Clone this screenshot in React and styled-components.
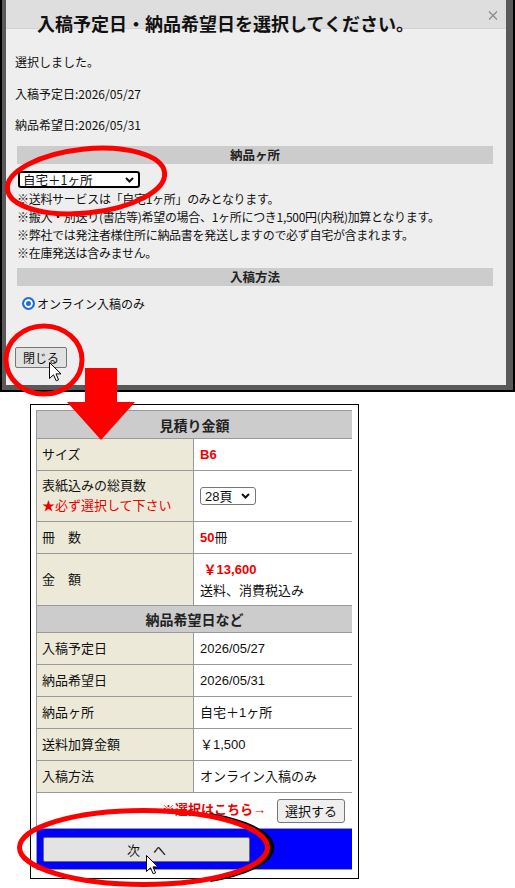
import { Fragment } from 'react'
import styled, { createGlobalStyle } from 'styled-components'

const GlobalStyle = createGlobalStyle`
  html, body {
    margin: 0;
    padding: 0;
    background: #fff;
  }
  body {
    width: 515px;
    height: 888px;
    overflow: hidden;
    font-family: "Liberation Sans", "Noto Sans CJK JP", sans-serif;
    color: #111;
  }
`

const Page = styled.div`
    position: relative;
    width: 515px;
    height: 888px;
    overflow: hidden;
`

/* ---------- top screenshot: the modal ---------- */

const Shot = styled.div`
    width: 515px;
    height: 392px;
    box-sizing: border-box;
    border: 2px solid #000;
    border-top: none;
    background: #595959;
    padding-left: 4px;
`

const Dialog = styled.div`
    width: 500px;
    height: 385px;
    background: #eeeeee;
    display: flex;
    flex-direction: column;
    font-family: "Noto Sans CJK JP", sans-serif;
    font-size: 12px;
    color: #111;
`

const DialogHead = styled.div`
    flex: none;
    height: 29px;
    box-sizing: border-box;
    background: #dedede;
    border-bottom: 1px solid #d2d2d2;
    display: flex;
    justify-content: space-between;
    align-items: flex-start;
    padding: 0 8px 0 31px;
`

const Title = styled.h2`
    margin: 13px 0 0;
    font-size: 18px;
    line-height: 21px;
    font-weight: bold;
    color: #111;
    white-space: nowrap;
`

const CloseX = styled.svg`
    margin-top: 11px;
    flex: none;
`

const DialogBody = styled.div`
    display: flex;
    flex-direction: column;
    padding: 0 13px 0 9px;
`

const Msg = styled.p`
    margin: ${p => p.$top}px 0 0;
    line-height: 18px;
    white-space: nowrap;
`

const SectionBar = styled.div`
    margin: ${p => p.$top}px 0 0 2px;
    height: 18px;
    background: #cccccc;
    font-weight: bold;
    font-size: 12.5px;
    line-height: 18px;
    text-align: center;
    color: #222;
`

const PlaceSelect = styled.div`
    margin: 7px 0 0 3px;
    width: 122px;
    height: 17px;
    box-sizing: border-box;
    border: 2px solid #000;
    border-radius: 3px;
    background: #fff;
    display: flex;
    align-items: center;
    justify-content: space-between;
    padding: 0 4px 0 3px;
    font-size: 12.5px;
    line-height: 13px;
`

const Notes = styled.div`
    margin: 2px 0 0 2px;
    line-height: 18px;
    letter-spacing: -0.3px;
    white-space: nowrap;
`

const RadioRow = styled.label`
    margin: 8px 0 0 7px;
    display: flex;
    align-items: center;
    gap: 2px;
    height: 18px;
`

const RadioDot = styled.span`
    width: 13px;
    height: 13px;
    box-sizing: border-box;
    border-radius: 50%;
    border: 2px solid #1a6fd8;
    background: #1a6fd8;
    box-shadow: inset 0 0 0 2px #fff;
`

const CloseButton = styled.button`
    margin-top: 35px;
    align-self: flex-start;
    width: 52px;
    height: 21px;
    box-sizing: border-box;
    border: 1px solid #777;
    border-radius: 2px;
    background: #e1e1e1;
    font-family: "Noto Sans CJK JP", sans-serif;
    font-size: 12px;
    color: #111;
    padding: 0;
`

/* ---------- bottom screenshot: the quote table ---------- */

const Quote = styled.div`
    margin: 12px 0 0 30px;
    width: 329px;
    box-sizing: border-box;
    border: 1px solid #000;
    padding: 5px 6px 8px 5px;
`

const Grid = styled.div`
    display: grid;
    grid-template-columns: 156px 158px;
    gap: 1px;
    background: #999;
    border: 1px solid #999;
    font-size: 13px;
`

const HeadCell = styled.div`
    grid-column: 1 / -1;
    height: ${p => p.$h}px;
    background: #cccccc;
    display: flex;
    align-items: center;
    justify-content: center;
    font-weight: bold;
    font-size: 14px;
    color: #222;
`

const Label = styled.div`
    height: ${p => p.$h || 31}px;
    background: #ece9d8;
    padding-left: 5px;
    display: flex;
    flex-direction: column;
    justify-content: center;
    line-height: 20px;
`

const Value = styled.div`
    height: ${p => p.$h || 31}px;
    background: #fff;
    padding-left: 6px;
    display: flex;
    flex-direction: column;
    justify-content: center;
    align-items: flex-start;
    line-height: 21px;
`

const Red = styled.span`
    color: #ee0000;
    font-weight: ${p => (p.$bold ? 'bold' : 'normal')};
`

const PageSelect = styled.div`
    width: 56px;
    height: 18px;
    box-sizing: border-box;
    border: 1px solid #767676;
    border-radius: 3px;
    display: flex;
    align-items: center;
    justify-content: space-between;
    padding: 0 5px 0 4px;
    font-size: 13px;
`

const PickRow = styled.div`
    grid-column: 1 / -1;
    height: 35px;
    background: #fff;
    display: flex;
    align-items: center;
    justify-content: flex-end;
    gap: 11px;
    padding-right: 7px;
`

const PickHint = styled.span`
    color: #ee0000;
    font-weight: bold;
    margin-top: -5px;
`

const PickButton = styled.button`
    width: 68px;
    height: 24px;
    box-sizing: border-box;
    border: 1px solid #767676;
    border-radius: 3px;
    background: #efefef;
    font-family: "Noto Sans CJK JP", sans-serif;
    font-size: 13px;
    color: #111;
    padding: 0;
`

const NextRow = styled.div`
    grid-column: 1 / -1;
    height: 40px;
    background: #0000ff;
    display: flex;
    align-items: center;
    padding-left: 6px;
`

const NextButton = styled.button`
    width: 207px;
    height: 25px;
    box-sizing: border-box;
    border: 1px solid #6b6b6b;
    border-radius: 2px;
    background: #e3e3e3;
    font-family: "Noto Sans CJK JP", sans-serif;
    font-size: 13px;
    color: #111;
    padding: 0;
`

/* ---------- annotations drawn over both shots ---------- */

const Marks = styled.svg`
    position: absolute;
    left: 0;
    top: 0;
    pointer-events: none;
`

function Chevron({ w = 9 }) {
    return (
        <svg width={w} height="6" viewBox="0 0 9 6">
            <polyline points="1,1 4.5,4.5 8,1" fill="none" stroke="#111" strokeWidth="2" />
        </svg>
    )
}

function Cursor({ x, y }) {
    return (
        <g transform={`translate(${x},${y})`}>
            <path d="M0.5 0.5 L0.5 16.5 L4.5 12.8 L7.2 18.8 L9.6 17.8 L7 11.9 L12 11.9 Z"
                fill="#fff" stroke="#000" strokeWidth="1" strokeLinejoin="round" />
        </g>
    )
}

const rows = [
    { label: '入稿予定日', value: '2026/05/27' },
    { label: '納品希望日', value: '2026/05/31' },
    { label: '納品ヶ所', value: '自宅＋1ヶ所' },
    { label: '送料加算金額', value: '￥1,500' },
    { label: '入稿方法', value: 'オンライン入稿のみ' },
]

export default function App() {
    return (
        <Page>
            <GlobalStyle />
            <Shot>
                <Dialog>
                    <DialogHead>
                        <Title>入稿予定日・納品希望日を選択してください。</Title>
                        <CloseX width="10" height="9" viewBox="0 0 10 9">
                            <path d="M1 0.5 L9 8.5 M9 0.5 L1 8.5" stroke="#8a8a8a" strokeWidth="1.2" />
                        </CloseX>
                    </DialogHead>
                    <DialogBody>
                        <Msg $top={24}>選択しました。</Msg>
                        <Msg $top={14}>入稿予定日:2026/05/27</Msg>
                        <Msg $top={13}>納品希望日:2026/05/31</Msg>
                        <SectionBar $top={12}>納品ヶ所</SectionBar>
                        <PlaceSelect>
                            <span>自宅＋1ヶ所</span>
                            <Chevron />
                        </PlaceSelect>
                        <Notes>
                            ※送料サービスは「自宅1ヶ所」のみとなります。<br />
                            ※搬入・別送り(書店等)希望の場合、1ヶ所につき1,500円(内税)加算となります。<br />
                            ※弊社では発注者様住所に納品書を発送しますので必ず自宅が含まれます。<br />
                            ※在庫発送は含みません。
                        </Notes>
                        <SectionBar $top={6}>入稿方法</SectionBar>
                        <RadioRow>
                            <RadioDot />
                            オンライン入稿のみ
                        </RadioRow>
                        <CloseButton>閉じる</CloseButton>
                    </DialogBody>
                </Dialog>
            </Shot>

            <Quote>
                <Grid>
                    <HeadCell $h={27}>見積り金額</HeadCell>
                    <Label>サイズ</Label>
                    <Value><Red $bold>B6</Red></Value>
                    <Label $h={50}>
                        <span>表紙込みの総頁数</span>
                        <Red>★必ず選択して下さい</Red>
                    </Label>
                    <Value $h={50}>
                        <PageSelect>
                            <span>28頁</span>
                            <Chevron />
                        </PageSelect>
                    </Value>
                    <Label>冊　数</Label>
                    <Value><span><Red $bold>50</Red>冊</span></Value>
                    <Label $h={51}>金　額</Label>
                    <Value $h={51}>
                        <Red $bold>&nbsp;￥13,600</Red>
                        <span>送料、消費税込み</span>
                    </Value>
                    <HeadCell $h={26}>納品希望日など</HeadCell>
                    {rows.map(r => (
                        <Fragment key={r.label}>
                            <Label>{r.label}</Label>
                            <Value>{r.value}</Value>
                        </Fragment>
                    ))}
                    <PickRow>
                        <PickHint>※選択はこちら→</PickHint>
                        <PickButton>選択する</PickButton>
                    </PickRow>
                    <NextRow>
                        <NextButton>次　へ</NextButton>
                    </NextRow>
                </Grid>
            </Quote>

            <Marks width="515" height="888" viewBox="0 0 515 888">
                <ellipse cx="86" cy="181" rx="79" ry="32" transform="rotate(-6 86 181)"
                    fill="none" stroke="#ff0000" strokeWidth="5" />
                <ellipse cx="44" cy="360" rx="38" ry="34"
                    fill="none" stroke="#ff0000" strokeWidth="5" />
                <polygon points="85,368 117,368 117,402 135,402 101,440 67,402 85,402" fill="#ff0000" />
                <path d="M210 815.5 A124 37 0 0 1 210 879.5"
                    fill="none" stroke="#000" strokeWidth="5" />
                <ellipse cx="143.5" cy="847.5" rx="124" ry="37"
                    fill="none" stroke="#ff0000" strokeWidth="5" />
                <Cursor x={49} y={362} />
                <Cursor x={146} y={855} />
            </Marks>
        </Page>
    )
}
